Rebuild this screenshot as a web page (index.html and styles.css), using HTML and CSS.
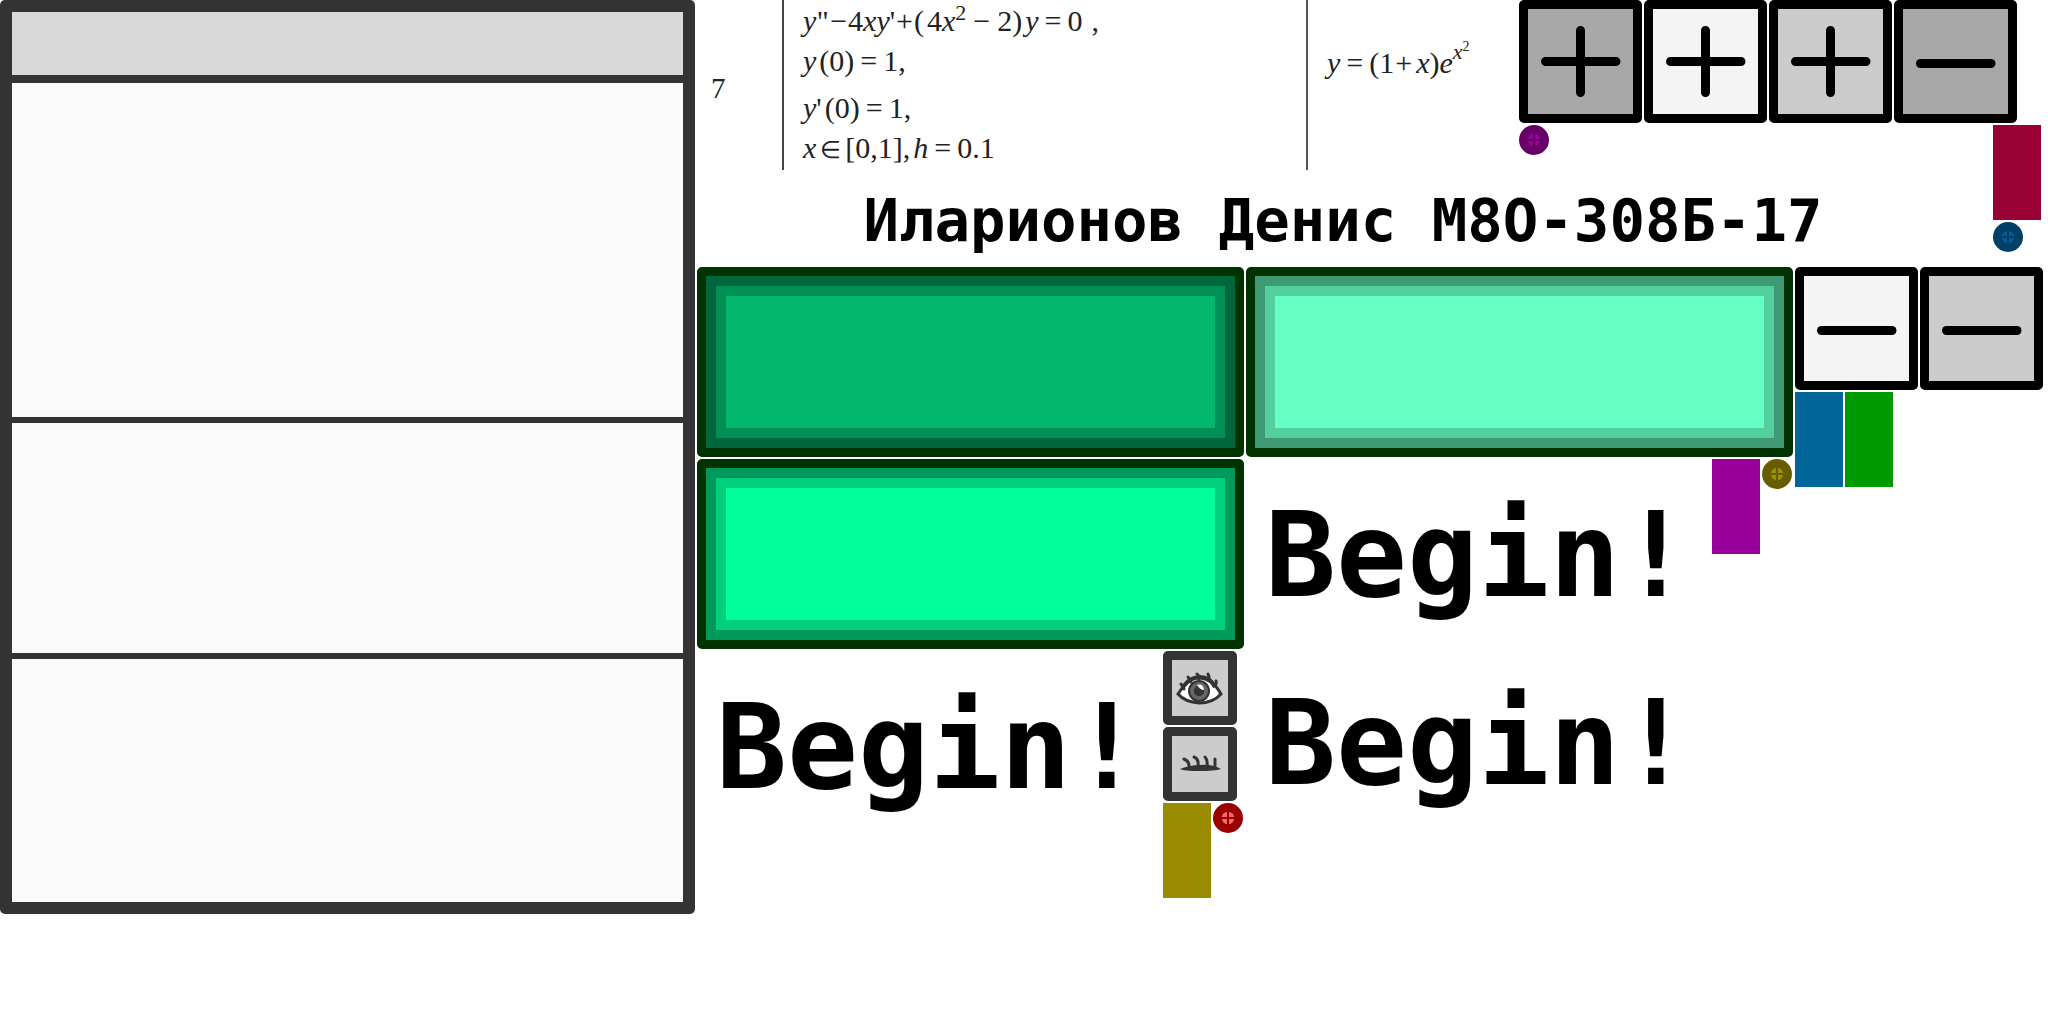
FILE: index.html
```html
<!DOCTYPE html>
<html lang="ru">
<head>
<meta charset="utf-8">
<title>Иларионов Денис М8О-308Б-17</title>
<link rel="stylesheet" href="styles.css">
</head>
<body>
<svg class="defs" aria-hidden="true">
  <symbol id="plus" viewBox="0 0 105 105"><path d="M17.500 52.500H88M52.500 21.500V83.500"/></symbol>
  <symbol id="minus" viewBox="0 0 105 105"><path d="M17.500 54.500H88"/></symbol>
  <symbol id="dot" viewBox="0 0 30 30"><circle cx="15" cy="15" r="15"/><circle class="core" cx="15" cy="15" r="6.300"/><path d="M15 8V22M8 15H22"/></symbol>
</svg>
<main class="sheet">
  <section class="window" aria-label="Window">
    <div class="pane title-pane"></div>
    <div class="pane pane-large"></div>
    <div class="pane pane-middle"></div>
    <div class="pane pane-bottom"></div>
  </section>
  <div class="content">
    <header class="top">
      <div class="task">
        <div class="number">7</div>
        <div class="conditions">
          <div class="pair">
            <div><i>y</i><span class="tight">''</span><span class="tight">−</span>4<i>xy</i>'<span class="tight">+</span>(<span class="lead">4</span><i>x</i><sup>2</sup><span class="wide">−</span>2)<i class="lead">y</i><span class="rel">=</span>0<span class="lead comma">,</span></div>
            <div><i>y</i><span class="lead">(0)</span><span class="rel">=</span>1,</div>
          </div>
          <div class="pair">
            <div><i>y</i>'<span class="lead">(0)</span><span class="rel">=</span>1,</div>
            <div><i>x</i><span class="member">∈</span>[0,1],<i class="lead">h</i><span class="rel">=</span>0.1</div>
          </div>
        </div>
        <div class="answer"><i>y</i><span class="rel">=</span>(1<span class="tight">+</span><i class="lead">x</i>)<i>e</i><sup class="power"><i>x</i><sup>2</sup></sup></div>
      </div>
      <div class="toolbar">
        <button class="square dark" aria-label="Add, pressed"><svg><use href="#plus"/></svg></button>
        <button class="square light" aria-label="Add, hover"><svg><use href="#plus"/></svg></button>
        <button class="square" aria-label="Add"><svg><use href="#plus"/></svg></button>
        <button class="square dark" aria-label="Remove, pressed"><svg><use href="#minus"/></svg></button>
      </div>
      <svg class="dot violet-dot"><use href="#dot"/></svg>
      <div class="stack">
        <div class="swatch crimson"></div>
        <svg class="dot blue-dot"><use href="#dot"/></svg>
      </div>
      <h1 class="name">Иларионов Денис М8О-308Б-17</h1>
    </header>
    <div class="columns">
      <div class="column">
        <button class="slab pressed" aria-label="Begin, pressed"></button>
        <button class="slab" aria-label="Begin"></button>
        <div class="row">
          <div class="words"><p class="word">Begin!</p></div>
          <div class="stack side">
            <button class="eye" aria-label="Show">
              <svg viewBox="0 0 56 56">
                <path d="M6 34Q17 17 27 18Q40 18 49 34Q41 43 27 43Q13 42 6 34Z" fill="#fff" stroke="#333" stroke-width="3"/>
                <path d="M11 27Q18 17 28 17Q38 17 43 27" fill="none" stroke="#333" stroke-width="4"/>
                <circle cx="27" cy="31" r="11" fill="#333"/>
                <circle cx="27" cy="31" r="7" fill="none" stroke="#666" stroke-width="4"/>
                <circle cx="27" cy="31" r="5" fill="#333"/>
                <path d="M25 25Q31 23 32 30Q28 30 25 25Z" fill="#fff"/>
                <path d="M12 29L9 24M19 22L16 17M27 19Q27 15 25 14M36 20Q38 17 36 14M42 26Q45 24 44 21" fill="none" stroke="#333" stroke-width="3" stroke-linecap="round"/>
              </svg>
            </button>
            <button class="eye" aria-label="Hide">
              <svg viewBox="0 0 56 56">
                <path d="M8 33Q18 29 28 29Q40 28 49 33Q42 35 28 35Q12 35 8 33Z" fill="#333"/>
                <path d="M17 30Q17 25 12 23M26 30Q27 23 22 21M35 30Q36 24 33 21M43 30V23" fill="none" stroke="#333" stroke-width="3" stroke-linecap="round"/>
              </svg>
            </button>
            <div class="row">
              <div class="swatch olive"></div>
              <svg class="dot red-dot"><use href="#dot"/></svg>
            </div>
          </div>
        </div>
      </div>
      <div class="column">
        <button class="slab hover" aria-label="Begin, hover"></button>
        <div class="row inset">
          <div class="words"><p class="word">Begin!</p><p class="word">Begin!</p></div>
          <div class="swatch violet"></div>
          <svg class="dot olive-dot"><use href="#dot"/></svg>
        </div>
      </div>
      <div class="column">
        <div class="row">
          <button class="square light" aria-label="Remove, hover"><svg><use href="#minus"/></svg></button>
          <button class="square" aria-label="Remove"><svg><use href="#minus"/></svg></button>
        </div>
        <div class="row">
          <div class="swatch blue"></div>
          <div class="swatch green"></div>
        </div>
      </div>
    </div>
  </div>
</main>
</body>
</html>
```
FILE: styles.css
```css
* { box-sizing: border-box; }
body { margin: 0; background: #fff; color: #000; }
.defs { position: absolute; width: 0; height: 0; }

.sheet {
  display: grid;
  grid-template-columns: minmax(0, 695fr) minmax(0, 1351fr);
  gap: 2px;
  align-items: start;
}

/* Window frame */
.window {
  display: flex;
  flex-direction: column;
  gap: 6px;
  padding: 12px;
  background: #333;
  border-radius: 5px;
}
.pane { background: #fafafa; }
.title-pane { height: 63px; margin-bottom: 2px; background: #d9d9d9; }
.pane-large { height: 334px; }
.pane-middle { height: 230px; }
.pane-bottom { height: 243px; }

/* Top area */
.top {
  display: grid;
  grid-template-columns: minmax(0, 822fr) minmax(0, 474fr) minmax(0, 55fr);
  grid-template-rows: 125px 45px 97px;
  grid-template-areas:
    "task tools tools"
    "task dot stack"
    "name name stack";
}
.task {
  grid-area: task;
  display: grid;
  grid-template-columns: 85px minmax(0, 524fr) minmax(0, 213fr);
  font: 30px/40px "Liberation Serif", "Times New Roman", serif;
  color: #222;
  white-space: nowrap;
}
.number { padding: 68px 0 0 14px; font-size: 29px; }
.conditions {
  display: flex;
  flex-direction: column;
  gap: 7px;
  padding: 1px 0 0 19px;
  border-left: 2px solid #444;
}
.answer { padding: 43px 0 0 19px; border-left: 2px solid #555; }
.task sup { font-size: 22px; line-height: 0; }
.task .power { vertical-align: 14px; }
.task sup sup { font-size: 14px; }
.tight { margin: 0 1px; }
.lead { margin-left: 3px; }
.wide { margin: 0 7px; }
.rel { margin: 0 6px; }
.member { margin: 0 4px; font-size: 24px; }
.comma { padding-left: 6px; }

.toolbar { grid-area: tools; display: flex; gap: 2px; }
.top > .dot { grid-area: dot; }
.top > .stack { grid-area: stack; }
.name {
  grid-area: name;
  margin: 0;
  padding: 2px 4px 0 0;
  font: bold 59px/98px "DejaVu Sans Mono", monospace;
  text-align: center;
  white-space: nowrap;
}

/* Sprites */
.columns {
  display: grid;
  grid-template-columns: minmax(0, 547fr) minmax(0, 547fr) minmax(0, 253fr);
  gap: 2px;
}
.column, .stack { display: flex; flex-direction: column; gap: 2px; }
.row { display: flex; gap: 2px; align-items: flex-start; }
.inset { padding-right: 1px; }
.side { width: 81px; }

button { margin: 0; padding: 0; font: inherit; cursor: pointer; }
.square {
  flex: none;
  width: 123px;
  height: 123px;
  border: 9px solid #000;
  border-radius: 5px;
  background: #ccc;
}
.square.dark { background: #a8a8a8; }
.square.light { background: #f4f4f4; }
.square svg {
  display: block;
  width: 105px;
  height: 105px;
  fill: none;
  stroke: #000;
  stroke-width: 9px;
  stroke-linecap: round;
}

.slab {
  height: 190px;
  border: 9px solid #030;
  border-radius: 5px;
  background: #00ff9b;
  box-shadow: inset 0 0 0 10px #00995c, inset 0 0 0 20px #00cf7c;
}
.slab.pressed {
  background: #03b86d;
  box-shadow: inset 0 0 0 10px #00663d, inset 0 0 0 20px #009056;
}
.slab.hover {
  background: #66ffc4;
  box-shadow: inset 0 0 0 10px #3e9974, inset 0 0 0 20px #53cf9e;
}

.eye {
  width: 74px;
  height: 74px;
  border: 9px solid #333;
  border-radius: 5px;
  background: #ccc;
}
.eye svg { display: block; width: 56px; height: 56px; }

.words { flex: 1; padding: 2px 0 0 19px; }
.word {
  margin: 0;
  font: bold 118px/188px "DejaVu Sans Mono", monospace;
}

.swatch { flex: none; width: 48px; height: 95px; }
.crimson { background: #903; }
.olive { background: #998c00; }
.violet { background: #909; }
.blue { background: #069; }
.green { background: #090; }

.dot { flex: none; width: 30px; height: 30px; fill: currentColor; stroke: none; }
.dot path, #dot path { stroke: currentColor; stroke-width: 2px; }
.core { fill: var(--core); }
.violet-dot { color: #606; --core: #909; }
.blue-dot { color: #004066; --core: #005c99; }
.olive-dot { color: #665c00; --core: #999100; }
.red-dot { color: #900; --core: #f66; }
```
